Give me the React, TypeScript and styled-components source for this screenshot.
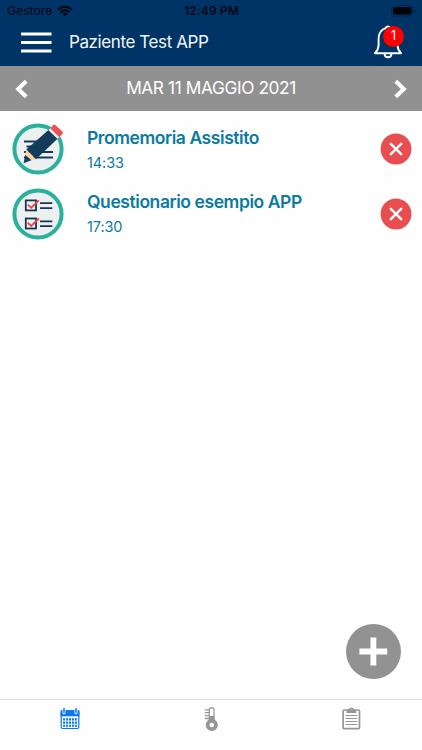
import React from "react";
import styled, { createGlobalStyle } from "styled-components";

const Global = createGlobalStyle`
  * { box-sizing: border-box; }
  body { margin: 0; background: #fefefe; font-family: Inter, "Liberation Sans", sans-serif; }
  button { border: 0; padding: 0; margin: 0; background: none; font: inherit; color: inherit; display: block; }
  svg { display: block; flex: none; }
`;

const Screen = styled.div`
  position: relative;
  width: 422px;
  height: 750px;
  display: flex;
  flex-direction: column;
  overflow: hidden;
  background: #fefefe;
`;

const Header = styled.header`
  height: 66px;
  flex: none;
  background: #003366;
`;

const StatusBar = styled.div`
  height: 22px;
  display: grid;
  grid-template-columns: 1fr auto 1fr;
  align-items: center;
  padding: 0 6px 0 7px;
  color: #020910;
  font-size: 12px;
  line-height: 22px;
`;

const Carrier = styled.div`
  display: flex;
  align-items: center;
  gap: 5px;
  letter-spacing: 0.1px;
`;

const Clock = styled.div`
  font-weight: 600;
  letter-spacing: 0.1px;
`;

const Battery = styled.div`
  justify-self: end;
`;

const TitleBar = styled.div`
  height: 44px;
  display: flex;
  align-items: center;
  padding: 0 16px 0 20px;
`;

const MenuButton = styled.button`
  width: 49px;
  padding-bottom: 2px;
`;

const PatientName = styled.h1`
  flex: 1;
  margin: 0;
  padding-bottom: 5px;
  color: #f4f7fa;
  font-size: 17px;
  font-weight: 400;
  line-height: 22px;
  letter-spacing: -0.4px;
`;

const BellButton = styled.button`
  position: relative;
  width: 34px;
  height: 38px;
`;

const Badge = styled.span`
  position: absolute;
  left: 11px;
  top: 1px;
  width: 21px;
  height: 21px;
  border-radius: 50%;
  background: #ff0000;
  color: #fff;
  font-size: 12.5px;
  line-height: 20px;
  text-align: center;
`;

const DateBar = styled.div`
  height: 45px;
  flex: none;
  display: flex;
  align-items: center;
  justify-content: space-between;
  padding: 0 15px;
  background: #919191;
  color: #fff;
`;

const DateLabel = styled.div`
  padding-bottom: 1px;
  font-size: 17.3px;
  line-height: 22px;
  letter-spacing: -0.4px;
`;

const List = styled.main`
  flex: 1;
  padding-top: 6px;
`;

const Row = styled.div`
  height: 64.5px;
  display: flex;
  align-items: center;
  padding: 0 10px 0 10px;
`;

const RowText = styled.div`
  flex: 1;
  margin-left: 21px;
  padding-top: 2px;
  color: #0c7a9f;
`;

const RowTitle = styled.div`
  font-size: 17.5px;
  font-weight: 600;
  line-height: 24px;
  letter-spacing: -0.43px;
  white-space: nowrap;
`;

const RowTime = styled.div`
  margin-top: 1px;
  font-size: 14.5px;
  line-height: 24px;
  letter-spacing: -0.1px;
`;

const AddButton = styled.button`
  position: absolute;
  left: 346px;
  top: 624px;
  width: 55px;
  height: 55px;
`;

const TabBar = styled.nav`
  height: 51px;
  flex: none;
  display: grid;
  grid-template-columns: repeat(3, 1fr);
  border-top: 1px solid #dedede;
`;

const Tab = styled.button<{ $active?: boolean }>`
  display: flex;
  justify-content: center;
  align-items: flex-start;
  padding-top: 7px;
  color: ${(p) => (p.$active ? "#0a78ef" : "#969696")};
`;

const Wifi = () => (
  <svg width="16" height="12" viewBox="0 0 16 12" fill="none" stroke="#020910" strokeWidth="2">
    <path d="M1 4.5Q8 -1.2 15 4.5M3.6 7.2Q8 3.5 12.4 7.2" />
    <path d="M5.5 8.7Q8 6.9 10.5 8.7L8 11.3Z" fill="#020910" stroke="none" />
  </svg>
);

const BatteryIcon = () => (
  <svg width="25" height="12" viewBox="0 0 25 12">
    <rect x="0.5" y="0.5" width="21.5" height="10.5" rx="3" fill="none" stroke="#02254b" />
    <rect x="2" y="2" width="18.5" height="7.5" rx="1.7" fill="#00040a" />
    <path d="M23.3 4v4q1.2-.5 1.2-2t-1.2-2" fill="#02254b" />
  </svg>
);

const MenuIcon = () => (
  <svg width="33" height="22" viewBox="0 0 33 22" stroke="#fff" strokeWidth="3">
    <path d="M1 2H31.5M1 10.5H31.5M1 19H31.5" />
  </svg>
);

const BellIcon = () => (
  <svg width="34" height="38" viewBox="0 0 34 38" fill="none" stroke="#fff" strokeWidth="1.9" strokeLinejoin="round">
    <path d="M13.2 3.3Q16 -.3 18.8 3.3Q25 5.5 25.5 13V20Q25.5 24.5 29 28.2H3Q6.6 24.5 6.6 20V13Q7 5.5 13.2 3.3Z" />
    <path d="M12.5 29Q12.7 32.3 16 32.3T19.5 29" />
  </svg>
);

const Chevron = ({ right = false }: { right?: boolean }) => (
  <svg width="13" height="20" viewBox="0 0 13 20" fill="none" stroke="#fff" strokeWidth="4">
    <path d={right ? "M1.8 2.3L9.8 10L1.8 17.7" : "M11.2 2.3L3.2 10L11.2 17.7"} />
  </svg>
);

const Ring = () => <circle cx="28" cy="28" r="23.6" fill="#ecf0f1" stroke="#2bb09d" strokeWidth="4" />;

const NoteIcon = () => (
  <svg width="56" height="56" viewBox="0 0 56 56">
    <Ring />
    <path d="M14 20.5H36M16.5 25.5H34M14 31H43M14 36.5H43" stroke="#123c5a" strokeWidth="1.8" />
    <path d="M38.5 8.9L47.5 17.7L25.9 38.2L16.2 28.5Z" fill="#123c5a" />
    <path d="M16.2 28.5L25.9 38.2L21.4 39.2L15.3 34.1Z" fill="#fbd49b" />
    <path d="M15.3 34.1L21.4 39.2L13.6 42.2Z" fill="#123c5a" />
    <path d="M38.5 8.9L41 6.7L50 15.5L47.5 17.7Z" fill="#ecf0f1" />
    <path d="M40.4 7.4L43.1 3.9Q44.1 2.9 45.2 3.9L52.4 10.6Q53.4 11.6 52.5 12.7L49.4 16.2Z" fill="#ee5055" />
  </svg>
);

const ChecklistIcon = () => (
  <svg width="56" height="56" viewBox="0 0 56 56">
    <Ring />
    {[14.4, 32.5].map((y) => (
      <g key={y} fill="none">
        <rect x="15.8" y={y} width="10.2" height="10" stroke="#17364f" strokeWidth="1.8" />
        <path d={`M30 ${y + 2.8}H42.3M30 ${y + 7.7}H42.3`} stroke="#17364f" strokeWidth="1.7" />
        <path d={`M17.8 ${y + 4.2}L21.2 ${y + 7.4}L28.8 ${y}`} stroke="#e94849" strokeWidth="1.9" />
      </g>
    ))}
  </svg>
);

const DeleteIcon = () => (
  <svg width="32" height="32" viewBox="0 0 32 32">
    <circle cx="16" cy="16" r="15.4" fill="#e84d50" />
    <path d="M10.8 10.8L21.2 21.2M21.2 10.8L10.8 21.2" stroke="#fff" strokeWidth="2.5" strokeLinecap="round" />
  </svg>
);

const PlusIcon = () => (
  <svg width="55" height="55" viewBox="0 0 55 55">
    <circle cx="27.5" cy="27.5" r="27.5" fill="#929292" />
    <path d="M13.4 27.5H41.2M27.4 13.6V41.4" stroke="#fff" strokeWidth="5.8" />
  </svg>
);

const CalendarIcon = () => (
  <svg width="20" height="24" viewBox="0 0 20 24">
    <rect x="1.2" y="3.5" width="17.6" height="18" rx="1.5" fill="#f7fbff" stroke="currentColor" strokeWidth="1.2" />
    <path d="M.6 4.5Q.6 3 2 3H18Q19.4 3 19.4 4.5V9.3H.6Z" fill="currentColor" />
    <path d="M4 2V5.8M16 2V5.8" stroke="#fff" strokeWidth="3" strokeLinecap="round" />
    <path d="M4 1.4V5.6M16 1.4V5.6" stroke="currentColor" strokeWidth="1.5" strokeLinecap="round" />
    {[12.4, 15.6, 18.8].map((y) => (
      <path key={y} d={`M3.1 ${y}H17`} stroke="currentColor" strokeWidth="2.1" strokeDasharray="2 .95" />
    ))}
  </svg>
);

const ThermometerIcon = () => (
  <svg width="16" height="25" viewBox="0 0 16 25">
    <circle cx="8.8" cy="18" r="4.2" fill="none" stroke="currentColor" strokeWidth="3.8" />
    <path d="M6.3 14V2.8Q6.3.7 8.6.7T11 2.8V14" fill="#fff" stroke="currentColor" strokeWidth="1.2" />
    <path d="M6 9H11.2V15H6Z" fill="currentColor" />
    <path d="M1.8 2.8H6M1.8 5.7H6M1.8 8.6H6M1.8 11.5H6" stroke="currentColor" strokeWidth="1.3" />
  </svg>
);

const ClipboardIcon = () => (
  <svg width="20" height="23" viewBox="0.6 0 20 23">
    <rect x="1.7" y="3" width="16.4" height="18.6" rx="1" fill="none" stroke="currentColor" strokeWidth="1.7" />
    <path fillRule="evenodd" d="M5.2 5.9V3.8Q6 2.5 7.3 2.5Q7.7.5 10 .5T12.6 2.5Q14 2.5 14.8 3.8V5.9ZM10 1.8A.9 .9 0 1 0 10 3.6A.9 .9 0 1 0 10 1.8Z" fill="currentColor" />
    <path d="M4 8.5H16M4 11.5H16M4 14.5H16M4 17.5H16" stroke="currentColor" strokeWidth="1" />
  </svg>
);

const entries = [
  { title: "Promemoria Assistito", time: "14:33", Icon: NoteIcon },
  { title: "Questionario esempio APP", time: "17:30", Icon: ChecklistIcon },
];

export default function App() {
  return (
    <Screen>
      <Global />
      <Header>
        <StatusBar>
          <Carrier>Gestore<Wifi /></Carrier>
          <Clock>12:49 PM</Clock>
          <Battery><BatteryIcon /></Battery>
        </StatusBar>
        <TitleBar>
          <MenuButton aria-label="Menu"><MenuIcon /></MenuButton>
          <PatientName>Paziente Test APP</PatientName>
          <BellButton aria-label="Notifiche"><BellIcon /><Badge>1</Badge></BellButton>
        </TitleBar>
      </Header>
      <DateBar>
        <button aria-label="Giorno precedente"><Chevron /></button>
        <DateLabel>MAR 11 MAGGIO 2021</DateLabel>
        <button aria-label="Giorno successivo"><Chevron right /></button>
      </DateBar>
      <List>
        {entries.map(({ title, time, Icon }) => (
          <Row key={title}>
            <Icon />
            <RowText>
              <RowTitle>{title}</RowTitle>
              <RowTime>{time}</RowTime>
            </RowText>
            <button aria-label="Elimina"><DeleteIcon /></button>
          </Row>
        ))}
      </List>
      <AddButton aria-label="Aggiungi"><PlusIcon /></AddButton>
      <TabBar>
        <Tab $active aria-label="Calendario"><CalendarIcon /></Tab>
        <Tab aria-label="Misure"><ThermometerIcon /></Tab>
        <Tab aria-label="Questionari"><ClipboardIcon /></Tab>
      </TabBar>
    </Screen>
  );
}
